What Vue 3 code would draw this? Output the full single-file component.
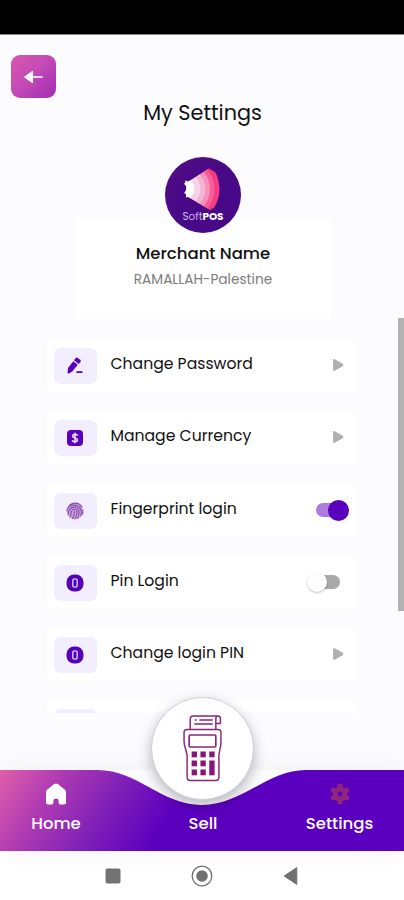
<template>
    <div class="phone">
        <div class="status-bar"></div>
        <main class="screen">
            <button class="back-button" aria-label="Back">
                <svg width="22" height="16" viewBox="0 0 22 16">
                    <path d="M8 8h11" stroke="#fff" stroke-width="1.7" stroke-linecap="round" />
                    <path d="M1.8 8 9.5 2.6v10.8z" fill="#fff" stroke="#fff" stroke-width="1.2" stroke-linejoin="round" />
                </svg>
            </button>
            <h1 class="title">My Settings</h1>

            <section class="profile">
                <div class="logo">
                    <svg class="logo-mark" width="38" height="44" viewBox="0 0 38 44">
                        <clipPath id="fan">
                            <path d="M3 13.5 4.5 15 9 12.5 25 2Q26.5 1 27.5 2.5L40 9V36L28.5 42Q27.5 43.5 26 42.5L9 32 4.5 29.5 3 30.5V27L1.5 26 3 23.5 3.5 21 3 18.5 1.5 17z" />
                        </clipPath>
                        <g clip-path="url(#fan)">
                            <circle v-for="ring in rings" :key="ring.r" cx="1" cy="22" :r="ring.r" :fill="ring.color" />
                        </g>
                    </svg>
                    <span class="logo-text">Soft<b>POS</b></span>
                </div>
                <div class="merchant">Merchant Name</div>
                <div class="location">RAMALLAH-Palestine</div>
            </section>

            <ul class="menu">
                <li v-for="item in items" :key="item.label" class="menu-item">
                    <span class="menu-icon">
                        <svg v-if="item.icon === 'pen'" width="20" height="20" viewBox="0 0 20 20" fill="#5b00bd">
                            <path d="M2.6 16.4 3 12 8.2 5.2 12.8 8.8 7.3 15.6 3.8 17.4Q2.5 17.8 2.6 16.4z" />
                            <path d="M9 4.3 10.6 2.2Q11.6 1 12.9 1.9L15.4 3.9Q16.4 4.8 15.5 6L13.7 8z" />
                            <path d="M11.4 15.2h6v1.8h-6z" />
                        </svg>
                        <svg v-else-if="item.icon === 'currency'" width="20" height="20" viewBox="0 0 20 20">
                            <rect x="2" y="2" width="16" height="16" rx="4" fill="#5b00bd" />
                            <path d="M12.6 7.6Q12 6.2 10 6.2T7.6 8Q7.6 9.4 10 9.9T12.5 12Q12.3 13.8 10 13.8T7.3 12.2M10 4.7v10.6" fill="none" stroke="#efe6fb" stroke-width="1.5" />
                        </svg>
                        <svg v-else-if="item.icon === 'finger'" width="20" height="20" viewBox="0 0 20 20" fill="none" stroke="#8a4cae" stroke-width="1.15" stroke-linecap="round">
                            <circle cx="10" cy="10.3" r="8" fill="#caa9de" stroke="none" />
                            <path d="M3.4 6Q6 2 10.4 2.1Q15 2.3 17 6.2M2 10Q2.2 5.2 7.3 4.3Q13 3.3 15.4 7.6Q17 11 15.8 15M3 13.8Q3.5 11.5 4 9.8Q5 6.5 9 6.1Q13.8 6.2 14 11Q14 14.5 12.8 17.4M5 16Q6.4 13.5 6.2 11Q6.6 8.3 9.5 8.2Q12.2 8.6 11.9 12Q11.7 15 10.2 18M7.5 17.6Q9.7 14 9.3 10.5M17.8 9v4" />
                        </svg>
                        <svg v-else width="20" height="20" viewBox="0 0 20 20">
                            <rect x="1.5" y="1.5" width="17" height="17" rx="7.6" fill="#5400b8" />
                            <rect x="7.8" y="5.9" width="4.4" height="8.2" rx="1.8" fill="none" stroke="#dcc8f5" stroke-width="1.4" />
                        </svg>
                    </span>
                    <span class="menu-label">{{ item.label }}</span>
                    <span v-if="item.type === 'switch'" class="switch" :class="{ on: item.value }" @click="item.value = !item.value">
                        <i class="knob"></i>
                    </span>
                    <svg v-else class="arrow" width="12" height="14" viewBox="0 0 12 14">
                        <path d="M2.4 1.8 10 6.2Q11.2 7 10 7.8L2.4 12.2Q1.8 12.4 1.8 11.6V2.4Q1.8 1.6 2.4 1.8z" fill="#b0b0b0" stroke="#b0b0b0" stroke-width="1.4" stroke-linejoin="round" />
                    </svg>
                </li>
                <li class="menu-item"><span class="menu-icon"></span></li>
            </ul>
            <i class="scrollbar"></i>
        </main>

        <nav class="tabs">
            <svg class="tabs-bg" width="404" height="81" viewBox="0 0 404 81">
                <defs>
                    <linearGradient id="tabsFill" gradientUnits="userSpaceOnUse" x1="-4" y1="6" x2="138" y2="96">
                        <stop offset="0" stop-color="#e05faa" />
                        <stop offset=".3" stop-color="#b23db2" />
                        <stop offset=".65" stop-color="#8020b7" />
                        <stop offset="1" stop-color="#5c00bf" />
                    </linearGradient>
                </defs>
                <path d="M0 0H98C137 0 162 35 202 35S267 0 306 0H404V81H0z" fill="url(#tabsFill)" />
            </svg>
            <a class="tab">
                <svg width="24" height="24" viewBox="0 0 24 24">
                    <path d="M2 10.2Q2 8.8 3.1 7.8L10.2 2Q12 .8 13.8 2L20.9 7.8Q22 8.8 22 10.2V20.4Q22 22.4 20 22.4H16.2Q14.6 22.4 14.6 20.8V18.4Q14.6 16.4 12 16.4T9.4 18.4V20.8Q9.4 22.4 7.8 22.4H4Q2 22.4 2 20.4z" fill="#fff" />
                </svg>
                <span>Home</span>
            </a>
            <a class="tab"><span>Sell</span></a>
            <a class="tab">
                <svg width="24" height="24" viewBox="0 0 24 24">
                    <g fill="#93267c">
                        <rect v-for="n in 3" :key="n" x="9.6" y="1.8" width="4.8" height="20.4" rx="1.2" :transform="`rotate(${n * 60} 12 12)`" />
                        <circle cx="12" cy="12" r="7.4" />
                    </g>
                    <circle cx="12" cy="12" r="2.4" fill="#5b00bd" />
                </svg>
                <span>Settings</span>
            </a>
            <button class="sell-button" aria-label="Sell">
                <svg width="41" height="70" viewBox="0 0 40 70" preserveAspectRatio="none" fill="none" stroke="#8a2379" stroke-width="1.4" stroke-linejoin="round">
                    <path d="M8 15V5.5Q8 2 11 2H35Q37.5 2 37.5 4.5V9.5H33V15M33 9.5V5Q33 2 35 2" />
                    <path d="M12.5 6h1.8M17 6h13M12 10h18" />
                    <path d="M5 15.5H35Q38 15.5 38 18.5V28Q38 32 37 35L36 41V63Q36 66.5 33 66.5H8Q5 66.5 5 63V41L3.5 35Q2 31 2 27V18.5Q2 15.5 5 15.5z" />
                    <rect x="7" y="21" width="26" height="12" rx="1" stroke-width="1.6" />
                    <g fill="#8a1379" stroke="none">
                        <rect x="9.4" y="37.5" width="5.2" height="5.8" /><rect x="18" y="37.5" width="5.2" height="5.8" /><rect x="26.6" y="37.5" width="5.2" height="5.8" />
                        <rect x="9.4" y="46.5" width="5.2" height="5.8" /><rect x="18" y="46.5" width="5.2" height="5.8" />
                        <rect x="9.4" y="55.5" width="5.2" height="5.8" /><rect x="18" y="55.5" width="5.2" height="5.8" /><rect x="26.6" y="46.5" width="5.2" height="14.8" />
                    </g>
                </svg>
            </button>
        </nav>

        <footer class="system-nav">
            <svg width="20" height="20" viewBox="0 0 20 20"><rect x="2.5" y="2.5" width="15" height="15" rx="2" fill="#737373" /></svg>
            <svg width="24" height="24" viewBox="0 0 24 24">
                <circle cx="12" cy="12" r="9.8" fill="none" stroke="#707070" stroke-width="1.3" />
                <circle cx="12" cy="12" r="5.8" fill="#707070" />
            </svg>
            <svg width="20" height="20" viewBox="0 0 20 20"><path d="M3.2 10 15.8 1.6v16.8z" fill="#707070" stroke="#707070" stroke-linejoin="round" /></svg>
        </footer>
    </div>
</template>

<script setup>
import { ref } from 'vue'

// 로고 부채꼴 색상 (바깥쪽부터)
const rings = [
    { r: 35.5, color: '#f43b83' },
    { r: 30.5, color: '#f65f98' },
    { r: 26, color: '#f590ba' },
    { r: 21.5, color: '#f2b4d4' },
    { r: 16.5, color: '#f6d3e8' },
    { r: 10.5, color: '#fff' },
];

const items = ref([
    { label: 'Change Password', icon: 'pen', type: 'link' },
    { label: 'Manage Currency', icon: 'currency', type: 'link' },
    { label: 'Fingerprint login', icon: 'finger', type: 'switch', value: true },
    { label: 'Pin Login', icon: 'pin', type: 'switch', value: false },
    { label: 'Change login PIN', icon: 'pin', type: 'link' },
]);
</script>

<style>
body{
    margin: 0;
    background: #fff;
}
</style>

<style scoped>
.phone{
    display: flex;
    flex-direction: column;
    width: 404px;
    height: 900px;
    overflow: hidden;
    background: #fcfbfe;
    color: #111;
    font-family: Poppins, Inter, "Liberation Sans", sans-serif;
}
button{
    border: 0;
    padding: 0;
    display: flex;
    align-items: center;
    justify-content: center;
}
.status-bar{
    flex: none;
    height: 35px;
    background: #000;
    border-bottom: 1px solid #888;
    box-sizing: border-box;
}
.screen{
    position: relative;
    display: flex;
    flex-direction: column;
    align-items: center;
    height: 735px;
    flex: none;
}
.back-button{
    align-self: flex-start;
    margin: 20px 0 0 11px;
    width: 45px;
    height: 43px;
    flex: none;
    border-radius: 9px;
    background: linear-gradient(135deg, #d957ae, #c44bb5 45%, #a32bb4);
}
.title{
    margin: 1px 0 0 1px;
    font-size: 20.8px;
    line-height: 28px;
    font-weight: 400;
}
.profile{
    display: flex;
    flex-direction: column;
    align-items: center;
    width: 255px;
    height: 101px;
    margin: 91px 0 0 2px;
    flex: none;
    background: #fff;
    border-radius: 3px;
}
.logo{
    flex: none;
    display: flex;
    flex-direction: column;
    align-items: center;
    width: 76px;
    height: 76px;
    margin: -61px 1px 0 0;
    border-radius: 50%;
    background: radial-gradient(circle at 60% 60%, #470987 50%, #59107f 100%);
}
.logo-mark{
    margin: 10px 1px 0 0;
}
.logo-text{
    margin-left: 1px;
    font-size: 10.4px;
    line-height: 12px;
    color: #d2b6e2;
}
.logo-text b{
    color: #fff;
    font-weight: 700;
}
.merchant{
    margin-top: 9px;
    font-size: 16.5px;
    line-height: 24px;
    font-weight: 500;
}
.location{
    margin-top: 4px;
    font-size: 13.7px;
    line-height: 20px;
    color: #7c7c7c;
}
.menu{
    list-style: none;
    display: flex;
    flex-direction: column;
    gap: 20.3px;
    width: 309px;
    height: 373px;
    margin: 21px 2px 0 0;
    padding: 0;
    overflow: hidden;
    flex: none;
}
.menu-item{
    display: flex;
    align-items: center;
    height: 52px;
    flex: none;
    box-sizing: border-box;
    padding: 0 8px 0 7px;
    background: #fff;
    border-radius: 5px;
}
.menu-icon{
    display: flex;
    align-items: center;
    justify-content: center;
    width: 43px;
    height: 36px;
    border-radius: 7px;
    background: #f2eefd;
}
.menu-label{
    flex: 1;
    margin: -5px 0 0 14px;
    font-size: 15.65px;
}
.arrow{
    margin: -2px 4px 0 0;
}
.switch{
    display: flex;
    align-items: center;
    width: 28px;
    height: 14px;
    margin: -1px 8px 0 0;
    border-radius: 7px;
    background: #a9a9a9;
}
.knob{
    width: 20px;
    height: 20px;
    margin-left: -5px;
    flex: none;
    border-radius: 50%;
    background: #fdfdfd;
    box-shadow: 0 1px 2px rgba(0, 0, 0, .25);
}
.switch.on{
    margin-right: 4px;
    background: #ac7cdf;
}
.switch.on .knob{
    width: 21px;
    height: 21px;
    margin-left: 12px;
    background: #5b00bd;
    box-shadow: none;
}
.scrollbar{
    position: absolute;
    right: 0;
    top: 283px;
    width: 6px;
    height: 293px;
    background: #b2b2b2;
}
.tabs{
    position: relative;
    display: grid;
    grid-template-columns: 112px 182px 110px;
    height: 81px;
    flex: none;
    box-shadow: 0 0 25px rgba(0, 0, 0, .06);
}
.tabs-bg{
    position: absolute;
    inset: 0;
}
.tab{
    position: relative;
    display: flex;
    flex-direction: column;
    justify-content: flex-end;
    align-items: center;
    height: 66px;
    color: #fff;
    font-size: 16.5px;
    line-height: 24px;
    font-weight: 500;
}
.tab svg{
    margin-bottom: 6.5px;
}
.tab:nth-of-type(3){
    padding-right: 19px;
}
.sell-button{
    position: absolute;
    left: 151px;
    top: -73px;
    width: 103px;
    height: 103px;
    border-radius: 50%;
    background: #fff;
    border: 1px solid #d0cedc;
    box-shadow: 0 5px 14px rgba(0, 0, 0, .28);
}
.system-nav{
    display: flex;
    align-items: center;
    justify-content: center;
    gap: 67px;
    height: 49px;
    flex: none;
    background: #fff;
}
</style>
